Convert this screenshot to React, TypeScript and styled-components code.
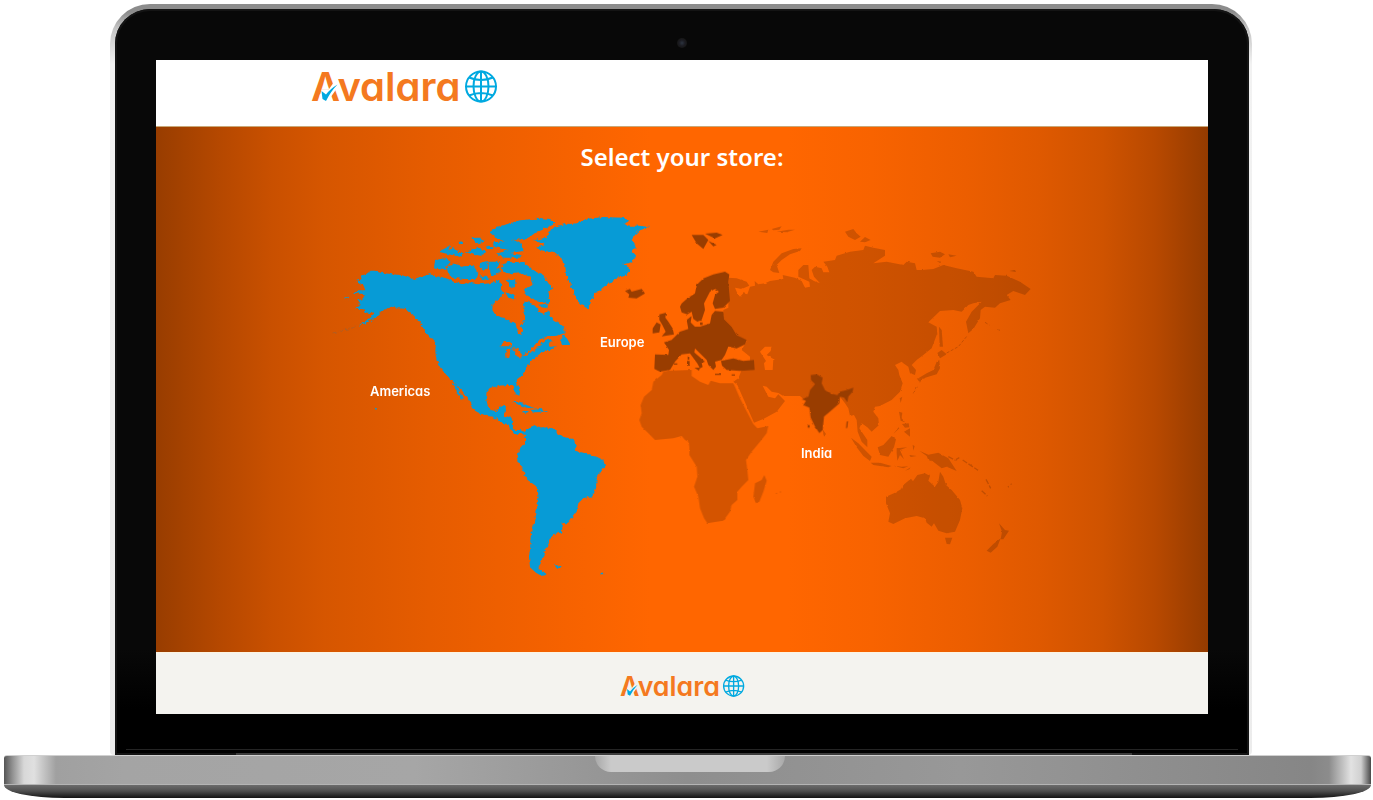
import React from "react";
import styled, { createGlobalStyle } from "styled-components";

const GlobalStyle = createGlobalStyle`
  * { box-sizing: border-box; }
  body { margin: 0; background: #fff; font-family: "Noto Sans", "Open Sans", sans-serif; }
`;

const Laptop = styled.div`
  padding: 4px 2px 0 4px;
`;

const Lid = styled.div`
  margin: 0 119px 0 106px;
  padding: 5px 3px 0 5px;
  border-radius: 40px 40px 4px 4px;
  background: linear-gradient(180deg, #8c8c8c 0, #8c8c8c 8px, #c4c4c4 24px, #f2f2f2 60px, #ececec 100%);
`;

const Bezel = styled.div`
  display: flex;
  flex-direction: column;
  padding: 0 41px 0 41px;
  border-radius: 35px 35px 0 0;
  background: linear-gradient(180deg, #080808 0, #080808 640px, #000 700px);
  box-shadow: inset 0 0 0 2px #141414;
`;

const CameraRow = styled.div`
  display: flex;
  justify-content: center;
  align-items: center;
  height: 51px;
  padding-top: 17px;
`;

const Camera = styled.span`
  width: 10px;
  height: 10px;
  border-radius: 50%;
  background: radial-gradient(circle, #2c3440 0, #1c1c22 40%, #161616 70%);
`;

const Screen = styled.div`
  background: #fff;
`;

const Header = styled.header`
  height: 67px;
  padding-top: 1px;
  border-bottom: 1px solid #c9a878;
`;

const Container = styled.div`
  max-width: 742px;
  margin: 0 auto;
`;

const LogoLink = styled.a`
  display: inline-block;
  line-height: 0;
`;

const LogoSvg = styled.svg<{ $width: number }>`
  width: ${(p) => p.$width}px;
  height: auto;
`;

const LogoWord = styled.text`
  fill: #f47920;
  font-family: Inter, sans-serif;
  font-size: 40px;
  font-weight: 600;
  font-feature-settings: "cv11" 1;
`;

const Hero = styled.main`
  display: flex;
  flex-direction: column;
  align-items: center;
  height: 525px;
  padding-top: 12px;
  background: linear-gradient(90deg,
    #983d00 0%, #b54800 6%, #c95000 11%, #d65600 16%, #e65c00 26%,
    #f66200 39%, #ff6600 47%, #ff6600 60%, #f86300 68%, #ec5e00 77%,
    #df5900 84%, #cf5300 90%, #b84900 95%, #943b00 100%);
`;

const Title = styled.h1`
  margin: 0;
  color: #fff;
  font-size: 24px;
  line-height: 36px;
  font-weight: 600;
`;

const MapArea = styled.nav`
  position: relative;
  width: 710px;
  height: 380px;
  margin: 30px 0 0 6px;
`;

const MapSvg = styled.svg`
  display: block;
  width: 100%;
  height: 100%;
`;

const StoreLink = styled.a<{ $left: number; $top: number }>`
  position: absolute;
  left: ${(p) => p.$left}px;
  top: ${(p) => p.$top}px;
  color: #fff;
  font-family: Inter, sans-serif;
  font-feature-settings: "cv11" 1;
  font-size: 13px;
  line-height: 18px;
  font-weight: 600;
  text-decoration: none;
`;

const Footer = styled.footer`
  display: flex;
  justify-content: center;
  height: 62px;
  padding-top: 16px;
  border-top: 1px solid #fdf3e0;
  background: #f4f3ef;
`;

const Chin = styled.div`
  display: flex;
  flex-direction: column;
  justify-content: flex-end;
  height: 41px;
`;

const Hinge = styled.div`
  height: 2px;
  margin: 0 76px 0 80px;
  background: #3c3c3c;
`;

const ChinLine = styled.div`
  height: 1px;
  margin: 0 -30px 3px;
  background: #242424;
`;

const Deck = styled.div`
  display: flex;
  justify-content: center;
  height: 30px;
  border-top: 1px solid #d0d0d0;
  border-bottom: 1px solid #b4b4b4;
  border-radius: 3px 3px 0 0;
  background: linear-gradient(90deg,
    #555 0, #8e8e8e 8px, #d8d8d8 20px, #e0e0e0 30px, #a0a0a0 52px, #a4a4a4 120px,
    #a6a6a6 30%, #8e8e8e 50%, #989898 70%, #868686 calc(100% - 60px),
    #8c8c8c calc(100% - 42px), #e2e2e2 calc(100% - 20px), #d0d0d0 calc(100% - 10px), #484848 100%);
`;

const Notch = styled.div`
  width: 190px;
  height: 16px;
  margin-left: 4px;
  border-radius: 0 0 16px 16px;
  background: linear-gradient(90deg, #a8a8a8 0, #cacaca 16px, #cacaca calc(100% - 18px), #a8a8a8 100%);
`;

const Underside = styled.div`
  height: 13px;
  border-radius: 0 0 60px 60px / 0 0 13px 13px;
  background: linear-gradient(180deg, #6c6c6c 0, #505050 45%, #141414 100%);
`;

function Logo({ width, backdrop }: { width: number; backdrop: string }) {
  return (
    <LogoSvg $width={width} viewBox="0 -8 187 52" role="img" aria-label="Avalara">
      <LogoWord x="0" y="32">
        Avalara
      </LogoWord>
      {/* The tick takes the place of the crossbar */}
      <path d="M8.500 27.500 L10.500 20.500 H17.500 L19.500 27.500Z" fill={backdrop} />
      <path d="M14 31 L26 14" fill="none" stroke={backdrop} strokeWidth="6" />
      <path d="M10.500 22 L15 25.500 Q19 20 26.500 15.500 Q20 22 15 32 L11.500 30 Z" fill="#00a9e0" />
      <g fill="none" stroke="#00a9e0" strokeWidth="2">
        <circle cx="170" cy="17.500" r="15" />
        <ellipse cx="170" cy="17.500" rx="7.500" ry="15" />
        <path d="M170 2 V33 M155 17.500 H185 M158 8.500 Q170 13.500 182 8.500 M158 26.500 Q170 21.500 182 26.500" />
      </g>
    </LogoSvg>
  );
}

function WorldMap() {
  return (
    <MapSvg viewBox="330 205 710 380" aria-hidden="true">
      <defs>
        <filter id="coast" filterUnits="userSpaceOnUse" x="330" y="205" width="710" height="380" colorInterpolationFilters="sRGB">
          <feTurbulence type="fractalNoise" baseFrequency="0.28" numOctaves="2" seed="4" result="n" />
          <feDisplacementMap in="SourceGraphic" in2="n" scale="4" xChannelSelector="R" yChannelSelector="G" />
        </filter>
        <filter id="fineCoast" filterUnits="userSpaceOnUse" x="330" y="205" width="710" height="380" colorInterpolationFilters="sRGB">
          <feTurbulence type="fractalNoise" baseFrequency="0.22" numOctaves="2" seed="9" result="n" />
          <feDisplacementMap in="SourceGraphic" in2="n" scale="2" xChannelSelector="R" yChannelSelector="G" />
        </filter>
      </defs>

      <g filter="url(#fineCoast)">
        {/* Countries without a store */}
        <g opacity=".17">
          <g transform="translate(740 215) scale(.33333)">
            <path
              fillRule="evenodd"
              d="M-35 188 L-10 190 20 200 28 212 5 222 -15 218 -8 235 0 245 10 235 22 238 30 215 45 212 44 198 55 208 75 205 90 198 130 192 128 180 165 188 185 198 195 218 210 215 208 200 175 185 175 165 190 150 205 150 208 190 222 198 240 205 222 185 215 165 225 155 245 160 250 172 268 172 262 155 250 140 285 135 290 122 330 110 370 105 375 92 400 98 435 105 435 122 400 145 440 140 490 150 500 140 525 145 530 165 545 165 580 162 610 150 650 160 700 170 710 185 760 190 765 180 800 182 840 200 872 222 855 240 820 228 800 240 812 255 780 265 765 278 735 275 722 285 720 310 700 342 685 355 678 320 695 290 725 260 700 265 685 270 665 290 640 285 600 288 565 322 590 335 592 355 575 400 550 420 530 435 515 450 528 465 525 480 510 475 505 455 490 445 485 440 465 450 475 465 478 480 488 505 480 530 455 555 430 568 420 573 405 575 400 590 415 610 417 630 395 650 382 637 365 625 358 640 382 675 382 697 365 680 353 650 350 615 342 600 330 603 325 580 315 565 300 545 240 560 200 560 180 543 130 543 115 534 95 530 80 515 68 512 85 545 105 550 115 538 135 558 110 590 70 612 42 623 12 555 -8 510 -20 500 -5 490 5 465 -20 450 30 440 30 425 5 405 20 378 -10 360 -25 335 -50 310 -50 285 -35 278 -35 262Z M75 395 L95 395 92 408 80 420 100 432 98 465 75 465 72 445 78 438 60 410Z"
            />
            <path d="M90 165 L100 140 125 115 160 102 185 100 180 108 150 118 125 135 110 150 118 174 100 172Z M315 50 L340 42 350 55 362 65 345 75 325 65Z M360 80 L375 66 392 75 375 82Z M572 115 L600 110 615 118 600 128 578 125Z M625 118 L650 122 630 127Z M590 138 L605 140 600 144Z M808 168 L825 164 828 171Z M55 50 L85 44 82 54Z M95 42 L125 34 118 44 100 46Z M110 50 L145 44 165 44 140 52Z" />
            <path d="M597 335 L605 345 609 395 599 395Z M592 414 L605 405 620 418 600 430Z M598 435 L600 460 590 478 565 485 545 492 535 490 560 475 580 465 590 440Z M530 490 L545 492 540 503Z M479 550 L487 545 482 564Z" />
            <path d="M620 414 L655 395 682 362 M735 322 L748 330 M775 344 L780 346 M520 535 L534 512" fill="none" stroke="#000" strokeWidth="3" strokeDasharray="9 5" />
          </g>
          <g transform="translate(620 350) scale(.33333)">
            <path d="M130 65 L150 62 215 60 215 78 240 95 265 105 272 92 300 100 340 100 345 110 360 145 378 180 400 222 412 235 445 228 440 250 420 275 395 305 378 330 382 360 385 390 365 410 352 425 352 450 335 465 330 485 310 512 290 515 262 520 252 505 240 475 235 440 222 410 232 380 230 350 208 315 208 290 205 275 195 270 185 258 160 265 105 270 85 250 65 230 58 210 65 190 62 165 72 140 95 120 100 95 125 75Z M405 400 L425 390 433 375 440 392 430 425 418 455 408 460 400 440Z M466 430 l5 -2 v4z M478 426 l5 -2 v4z" />
          </g>
          <g transform="translate(780 360) scale(.33333)">
            <path d="M213 233 L235 250 255 270 275 290 270 303 250 288 230 262Z M272 308 L300 308 335 318 325 322 280 315Z M340 317 L365 320 385 319 370 325Z M375 332 L392 322 388 328Z M293 262 L310 255 335 228 348 238 342 262 325 290 300 285Z M350 265 L382 262 360 270 372 298 360 285 352 302 350 280Z M357 155 L367 158 365 175 375 187 362 182Z M366 192 L386 190 388 202 375 203Z M372 215 L390 205 390 230Z M340 222 L356 202 358 205Z M398 255 L404 258 400 272Z M388 285 L410 288 392 291Z" />
            <path d="M418 272 L445 284 475 278 505 295 530 333 500 320 485 325 460 305 445 300 440 288Z M318 410 L345 398 368 385 370 375 388 360 400 362 412 345 435 340 450 348 445 362 465 380 475 365 480 335 490 350 498 375 515 390 540 420 547 445 540 480 525 515 500 520 475 512 462 490 455 500 440 488 435 475 410 468 375 475 340 492 325 485 330 460 318 430Z M495 533 L517 533 510 553 500 552Z M657 490 L675 510 687 512 670 538 662 538 666 515Z M662 535 L652 560 632 578 620 572 640 552Z M128 208 L138 222 132 230Z M682 380 l5 -3 v6z M690 373 l5 -3 v5z" />
            <path d="M505 290 L525 300 540 292 M548 300 L600 335 M605 392 L622 408 M618 358 L632 385" fill="none" stroke="#000" strokeWidth="4" strokeDasharray="16 5" />
          </g>
        </g>

        {/* Europe */}
        <g transform="translate(600 215) scale(.33333)" fill="#993d00">
          <path d="M245 265 L262 250 285 235 290 210 310 190 340 178 375 170 388 178 385 200 390 258 370 278 345 282 338 265 345 240 357 230 345 222 330 230 312 265 315 285 305 315 292 320 280 312 275 290 262 298 245 292 240 275Z" />
          <path d="M165 418 L205 420 207 405 192 382 215 375 240 350 265 342 260 315 275 303 272 322 285 335 300 335 330 325 335 300 345 288 370 290 372 312 395 335 410 360 440 375 435 388 410 400 385 395 375 420 365 435 345 440 348 455 340 465 325 450 320 435 285 400 283 412 315 440 305 444 308 456 300 460 292 445 270 415 245 418 225 440 210 465 180 470 163 462Z" />
          <path d="M363 438 L400 430 430 438 462 435 464 465 420 468 380 465 366 452Z M283 458 L300 458 297 467Z M261 438 h8 v14 h-8Z M263 424 h5 v10 h-5Z M345 476 h18 v4 h-18Z M395 478 h10 v4 h-10Z M222 445 h10 v4 h-10Z" />
          <path d="M178 298 L198 293 196 308 205 320 218 340 222 358 185 364 197 350 187 330 178 315Z M158 340 L170 322 182 328 178 352 158 355Z M75 228 L90 222 95 230 125 222 135 235 110 250 85 248 88 238Z M275 60 L310 60 325 75 310 102 290 85Z M315 56 L350 53 368 60 345 70Z M325 78 L350 90 340 94Z M300 322 l8 0 v8 h-8Z" />
        </g>

        {/* India */}
        <g transform="translate(740 215) scale(.33333)" fill="#993d00">
          <path d="M212 480 L230 478 248 488 245 505 255 525 270 535 292 540 300 530 320 525 340 518 338 530 325 545 322 562 312 548 300 545 298 565 275 585 252 605 248 645 238 654 225 635 212 608 208 578 190 570 198 557 185 553 205 545 210 525 225 507 213 495Z M320 620 L324 618 322 638 318 640Z M203 630 h6 v8 h-6Z" />
        </g>
      </g>

      {/* Americas */}
      <g fill="#079bd6" filter="url(#coast)">
        <g transform="translate(330 205) scale(.33333)">
          <path
            fillRule="evenodd"
            d="M78 228 L98 222 95 212 110 206 122 197 135 197 150 203 165 204 185 208 210 210 235 215 252 222 270 216 285 212 300 208 318 214 335 216 355 222 370 230 385 234 400 238 415 232 440 238 470 236 492 232 505 226 515 238 512 250 522 262 512 275 498 285 488 298 487 315 494 326 505 333 520 338 540 350 556 352 560 370 564 384 572 386 577 375 572 360 580 350 588 336 580 325 584 308 580 292 592 290 610 298 620 308 630 322 640 326 655 316 662 330 672 346 690 358 703 372 704 384 680 392 660 394 640 398 625 408 612 422 598 438 575 452 595 448 618 432 640 410 664 402 668 408 652 416 660 426 682 422 660 436 640 440 628 448 615 458 600 470 592 485 588 498 578 510 562 522 558 532 564 545 570 560 568 572 558 568 552 552 545 540 530 540 510 542 495 546 480 548 470 560 468 580 472 600 480 614 495 618 505 612 510 602 528 600 524 618 520 634 548 640 548 660 520 655 505 645 490 635 465 632 440 620 425 608 425 595 410 575 395 555 375 535 358 520 345 505 332 490 320 468 316 440 318 415 300 395 285 380 270 350 255 335 240 320 225 312 205 310 185 305 165 312 150 325 130 342 110 354 85 362 100 352 120 340 135 322 120 324 105 322 100 312 75 312 92 300 82 285 100 283 104 268 72 264 84 256 106 256 100 240Z M508 424 L525 408 540 410 550 424 530 424Z M528 436 L542 430 538 458 530 460Z M548 430 L565 432 576 446 574 458 560 454 556 442Z"
          />
          <path d="M612 105 L650 98 655 82 675 65 700 58 745 55 770 42 820 36 880 38 900 48 880 56 900 62 925 62 958 66 930 76 915 90 905 105 918 125 905 140 918 155 905 172 880 178 900 190 888 212 860 218 840 235 820 250 795 265 785 285 775 312 755 300 740 285 732 262 722 240 715 225 708 200 705 180 690 155 672 140 640 138 618 128 645 120Z" />
          <path d="M478 82 L500 68 530 58 570 46 620 41 660 45 675 55 650 68 620 80 600 95 580 105 560 102 530 112 500 100Z M490 112 L560 106 578 118 580 138 540 144 575 150 570 158 520 158 496 148 535 135 490 125Z M326 140 L360 122 355 135 370 130 400 148 390 155 350 146Z M382 112 L400 108 398 120Z M424 98 L450 98 462 112 440 114Z M408 140 L440 128 465 138 460 152 430 150Z M470 122 L486 124 490 132 474 132Z" />
          <path d="M315 165 L345 160 362 170 340 195 312 190Z M350 190 L370 175 400 184 430 182 445 205 440 222 400 222 370 218 355 205Z M448 175 L470 168 474 190 455 195Z M475 170 L510 170 500 188 515 195 490 215 478 205Z M448 214 L470 212 478 224 460 226Z M515 180 L535 170 580 172 610 195 640 210 655 235 670 250 652 262 660 282 655 300 640 290 615 285 590 270 580 255 608 240 600 215 570 205 545 208 520 200Z M530 225 L555 222 558 245 540 250Z M526 262 L550 270 558 284 535 278Z M628 300 L646 296 654 306 640 312Z" />
          <path d="M690 405 L700 386 712 402 722 420 700 420Z M300 388 L325 408 330 418 318 414Z M368 534 L380 540 388 560 402 582 392 580 380 560Z M545 592 L570 590 595 602 615 610 590 608 565 598Z M600 616 L630 612 652 620 615 622Z M578 618 h14 v5 h-14Z M45 276 L60 278 54 283Z M134 608 L141 610 138 616Z" />
          <path d="M8 384 L78 366" fill="none" stroke="#a06030" strokeWidth="2" strokeDasharray="14 5" />
        </g>
        <g transform="translate(430 380) scale(.33333)">
          <path d="M180 95 L205 92 222 78 228 75 222 108 245 110 250 120 246 140 255 150 272 150 285 158 300 142 315 135 330 142 370 145 385 160 400 170 430 178 437 195 435 212 460 218 500 230 520 240 525 258 510 280 500 292 498 325 488 348 460 355 445 370 440 392 425 412 410 430 393 428 398 445 392 458 370 462 365 475 355 478 352 500 340 512 345 525 335 540 330 555 325 565 350 585 335 588 318 578 300 562 297 530 300 510 302 470 305 450 315 425 320 390 325 350 323 322 290 298 278 268 262 242 266 212 285 190 285 165 272 160 262 165 240 148 235 130 205 122 190 108Z M375 556 L396 557 390 564 378 563Z M512 578 h8 v5 h-8Z" />
        </g>
      </g>
    </MapSvg>
  );
}

const stores = [
  { name: "Americas", left: 40, top: 177 },
  { name: "Europe", left: 270, top: 128 },
  { name: "India", left: 471, top: 239 },
];

export default function App() {
  return (
    <>
      <GlobalStyle />
      <Laptop>
        <Lid>
          <Bezel>
            <CameraRow>
              <Camera />
            </CameraRow>
            <Screen>
              <Header>
                <Container>
                  <LogoLink href="#">
                    <Logo width={187} backdrop="#fff" />
                  </LogoLink>
                </Container>
              </Header>
              <Hero>
                <Title>Select your store:</Title>
                <MapArea aria-label="Stores">
                  <WorldMap />
                  {stores.map((s) => (
                    <StoreLink key={s.name} href="#" $left={s.left} $top={s.top}>
                      {s.name}
                    </StoreLink>
                  ))}
                </MapArea>
              </Hero>
              <Footer>
                <LogoLink href="#">
                  <Logo width={125} backdrop="#f4f3ef" />
                </LogoLink>
              </Footer>
            </Screen>
            <Chin>
              <ChinLine />
              <Hinge />
            </Chin>
          </Bezel>
        </Lid>
        <Deck>
          <Notch />
        </Deck>
        <Underside />
      </Laptop>
    </>
  );
}
